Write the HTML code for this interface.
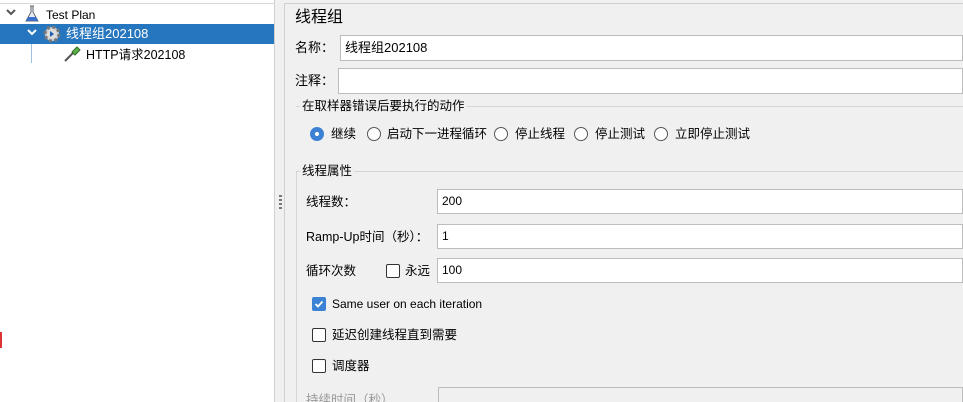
<!DOCTYPE html>
<html style="overflow:hidden"><head><meta charset="utf-8"><style>
*{margin:0;padding:0;box-sizing:border-box}
html,body{width:963px;height:402px;overflow:hidden}
body{background:#f0f0f0;font-family:"Liberation Sans","Noto Sans CJK SC",sans-serif;font-size:12px;color:#000;position:relative}
.a{position:absolute;white-space:nowrap;line-height:14px}
.in{position:absolute;background:#fff;border:1px solid #bdbdbd;height:25px;padding:0 0 0 4px;line-height:23px;font-size:12px}
.rb{position:absolute;width:14px;height:14px;border:1px solid #555;border-radius:50%;background:#fff}
.cb{position:absolute;width:14px;height:14px;border:1px solid #333;border-radius:2px;background:#fff}
.line{position:absolute;height:1px;background:#d5d5d5}
</style></head><body>
<div class="a" style="left:0;top:0;width:275px;height:402px;background:#fff;border-right:1px solid #d0d0d0"></div>
<div class="a" style="left:0;top:3px;width:275px;height:1px;background:#d8d8d8"></div>
<div class="a" style="left:0;top:24px;width:274px;height:20px;background:#2675bf"></div>
<svg class="a" style="left:5px;top:8px" width="12" height="10"><path d="M2 2l4 4 4-4" stroke="#555" stroke-width="2" fill="none"/></svg>
<svg class="a" style="left:24px;top:5px" width="16" height="18"><path d="M6 1h4M7 1v6L2 16h12L9 7V1" stroke="#666" fill="#e8eef8"/><path d="M4 12h8l2 4H2z" fill="#3a6fd0"/></svg>
<div class="a" style="left:46px;top:8px">Test Plan</div>
<svg class="a" style="left:26px;top:28px" width="12" height="10"><path d="M2 2l4 4 4-4" stroke="#fff" stroke-width="2" fill="none"/></svg>
<svg class="a" style="left:43px;top:25px" width="18" height="18"><circle cx="9" cy="9" r="7" fill="#ccc" stroke="#777" stroke-width="3" stroke-dasharray="3 2.5"/><circle cx="9" cy="9" r="5" fill="#ddd"/><path d="M7 6l4 3-4 3z" fill="#1e5fb0"/></svg>
<div class="a" style="left:66px;top:27px;color:#fff;font-size:13px">线程组202108</div>
<div class="a" style="left:31px;top:44px;width:1px;height:19px;background:#9ec1e6"></div>
<svg class="a" style="left:62px;top:45px" width="20" height="18"><path d="M3 16l8-8" stroke="#555" stroke-width="2"/><path d="M10 7l5-5 3 3-5 5z" fill="#5bb04a" stroke="#2e6e25"/></svg>
<div class="a" style="left:86px;top:48px;font-size:12.5px">HTTP请求202108</div>
<div class="a" style="left:279px;top:195px;width:3px;height:16px;background:repeating-linear-gradient(#777 0 2px,transparent 2px 4px)"></div>
<div class="a" style="left:284px;top:3px;width:1px;height:399px;background:#d0d0d0"></div>
<div class="a" style="left:284px;top:3px;width:679px;height:1px;background:#d0d0d0"></div>
<div class="a" style="left:295px;top:9px;font-size:16px;line-height:18px">线程组</div>
<div class="a" style="left:295px;top:41px;font-size:13px">名称：</div>
<div class="in" style="left:340px;top:35px;width:623px;height:26px;line-height:24px;font-size:13px">线程组202108</div>
<div class="a" style="left:295px;top:74px;font-size:13px">注释：</div>
<div class="in" style="left:338px;top:68px;width:625px;height:26px"></div>
<div class="line" style="left:296px;top:106px;width:667px"></div>
<div class="a" style="left:300px;top:99px;background:#f0f0f0;padding:0 2px;font-size:12.5px">在取样器错误后要执行的动作</div>
<div class="rb" style="left:310px;top:127px;background:#3c82d4;border-color:#3c82d4"><div style="position:absolute;left:4px;top:4px;width:4px;height:4px;border-radius:50%;background:#fff"></div></div>
<div class="a" style="left:331px;top:127px;font-size:12.5px">继续</div>
<div class="rb" style="left:367px;top:127px"></div>
<div class="a" style="left:387px;top:127px;font-size:12.5px">启动下一进程循环</div>
<div class="rb" style="left:494px;top:127px"></div>
<div class="a" style="left:515px;top:127px;font-size:12.5px">停止线程</div>
<div class="rb" style="left:574px;top:127px"></div>
<div class="a" style="left:595px;top:127px;font-size:12.5px">停止测试</div>
<div class="rb" style="left:654px;top:127px"></div>
<div class="a" style="left:675px;top:127px;font-size:12.5px">立即停止测试</div>
<div class="line" style="left:296px;top:171px;width:667px"></div>
<div class="a" style="left:300px;top:164px;background:#f0f0f0;padding:0 2px;font-size:12.5px">线程属性</div>
<div class="a" style="left:296px;top:171px;width:1px;height:231px;background:#d5d5d5"></div>
<div class="a" style="left:306px;top:195px;font-size:12.5px">线程数：</div>
<div class="in" style="left:437px;top:189px;width:526px">200</div>
<div class="a" style="left:306px;top:230px;font-size:12.5px">Ramp-Up时间（秒）：</div>
<div class="in" style="left:437px;top:224px;width:526px">1</div>
<div class="a" style="left:306px;top:264px;font-size:12.5px">循环次数</div>
<div class="cb" style="left:386px;top:264px"></div>
<div class="a" style="left:405px;top:264px;font-size:12.5px">永远</div>
<div class="in" style="left:437px;top:258px;width:526px">100</div>
<div class="cb" style="left:312px;top:297px;background:#3c82d4;border-color:#3c82d4"><svg width="12" height="12" style="position:absolute;left:0;top:0"><path d="M2.5 6l2.5 2.5 4.5-5" stroke="#fff" stroke-width="1.8" fill="none"/></svg></div>
<div class="a" style="left:332px;top:297px;font-size:12px">Same user on each iteration</div>
<div class="cb" style="left:312px;top:328px"></div>
<div class="a" style="left:332px;top:328px;font-size:12.5px">延迟创建线程直到需要</div>
<div class="cb" style="left:312px;top:359px"></div>
<div class="a" style="left:332px;top:359px;font-size:12.5px">调度器</div>
<div class="a" style="left:306px;top:393px;font-size:12.5px;color:#999">持续时间（秒）</div>
<div class="in" style="left:438px;top:387px;width:525px;height:15px;background:#f0f0f0;border-bottom:0"></div>
<div class="a" style="left:0;top:332px;width:2px;height:16px;background:#d33"></div>
</body></html>
